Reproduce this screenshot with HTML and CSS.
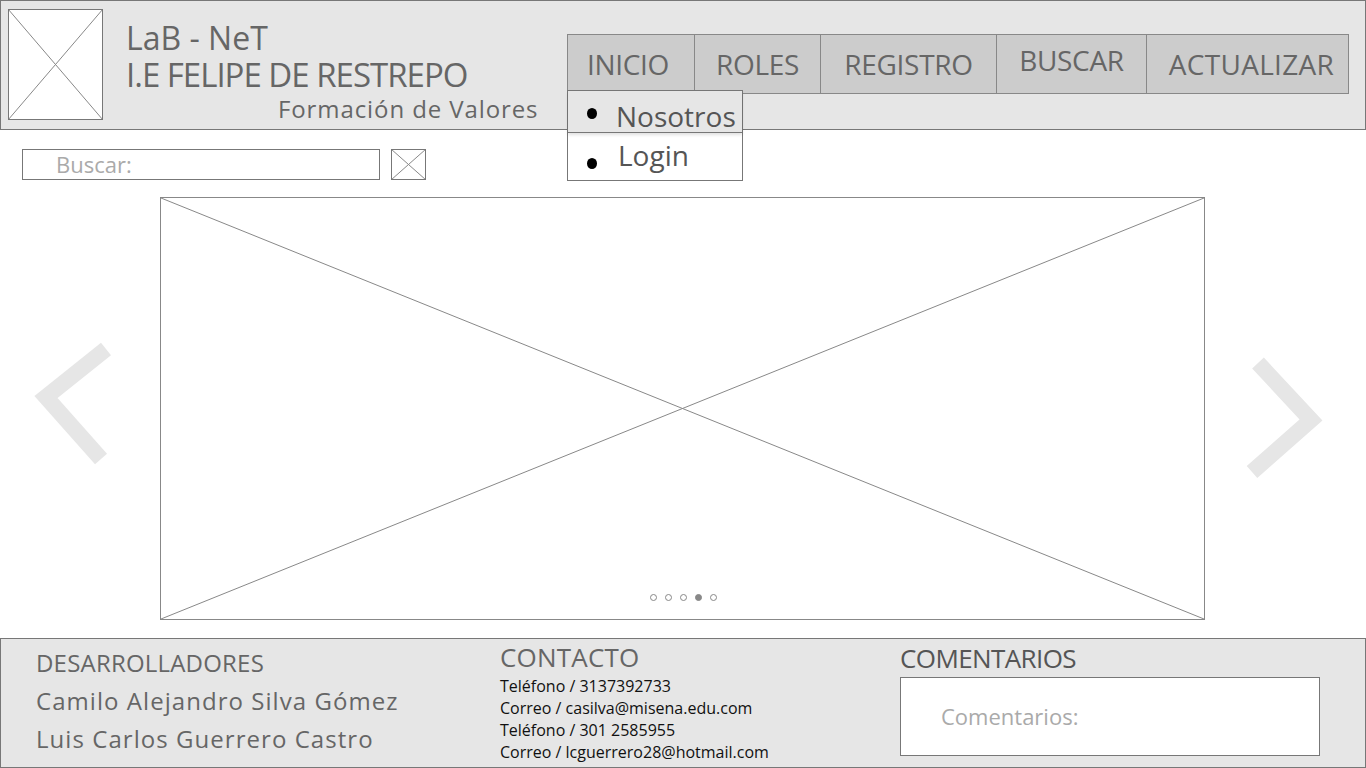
FILE: index.html
```html
<!DOCTYPE html>
<html>
<head>
  <title>LaB - NeT</title>
  <link rel="stylesheet" href="styles.css">
</head>
<body>
  <div class="cabecera">
    <div class="logo">
      <svg width="95" height="111" viewBox="0 0 95 111" preserveAspectRatio="none">
        <line x1="0" y1="0" x2="95" y2="111" stroke="#888" stroke-width="1"/>
        <line x1="95" y1="0" x2="0" y2="111" stroke="#888" stroke-width="1"/>
      </svg>
    </div>
    <div class="titulo">
      <div class="t1">LaB - NeT</div>
      <div class="t2">I.E FELIPE DE RESTREPO</div>
      <div class="t3">Formación de Valores</div>
    </div>
    <ul class="menu">
      <li class="m-inicio">INICIO</li>
      <li class="m-roles">ROLES</li>
      <li class="m-registro">REGISTRO</li>
      <li class="m-buscar">BUSCAR</li>
      <li class="m-actualizar">ACTUALIZAR</li>
    </ul>
  </div>

  <div class="submenu">
    <div class="sub-item activo"><span class="punto"></span>Nosotros</div>
    <div class="sub-item login"><span class="punto"></span>Login</div>
  </div>

  <div class="busqueda">
    <div class="campo">Buscar:</div>
    <div class="boton-x">
      <svg width="35" height="31" viewBox="0 0 35 31" preserveAspectRatio="none">
        <line x1="0" y1="0" x2="35" y2="31" stroke="#888" stroke-width="1"/>
        <line x1="35" y1="0" x2="0" y2="31" stroke="#888" stroke-width="1"/>
      </svg>
    </div>
  </div>

  <div class="carrusel">
    <div class="flecha">
      <svg width="160" height="423" viewBox="0 0 160 423">
        <polyline points="106,152 46,200 101,262" fill="none" stroke="#e6e6e6" stroke-width="16"/>
      </svg>
    </div>
    <div class="imagen">
      <svg class="cruz" viewBox="0 0 1045 423" preserveAspectRatio="none">
        <line x1="0" y1="0" x2="1045" y2="423" stroke="#888" stroke-width="1"/>
        <line x1="1045" y1="0" x2="0" y2="423" stroke="#888" stroke-width="1"/>
      </svg>
      <div class="puntos">
        <span></span><span></span><span></span><span class="lleno"></span><span></span>
      </div>
    </div>
    <div class="flecha">
      <svg width="161" height="423" viewBox="0 0 161 423">
        <polyline points="53,166 106,223 47,275" fill="none" stroke="#e6e6e6" stroke-width="16"/>
      </svg>
    </div>
  </div>

  <div class="pie">
    <div class="col-dev">
      <div class="dev-titulo">DESARROLLADORES</div>
      <div class="dev-nombre">Camilo Alejandro Silva Gómez</div>
      <div class="dev-nombre">Luis Carlos Guerrero Castro</div>
    </div>
    <div class="col-contacto">
      <div class="pie-titulo">CONTACTO</div>
      <div class="dato">Teléfono / 3137392733</div>
      <div class="dato">Correo / casilva@misena.edu.com</div>
      <div class="dato">Teléfono / 301 2585955</div>
      <div class="dato">Correo / lcguerrero28@hotmail.com</div>
    </div>
    <div class="col-comentarios">
      <div class="pie-titulo com">COMENTARIOS</div>
      <div class="caja-com">Comentarios:</div>
    </div>
  </div>
</body>
</html>
```

FILE: styles.css
```css
body {
  margin: 0;
  font-family: "Open Sans", sans-serif;
  color: #666;
  background: #fff;
}
.cabecera {
  display: flex;
  align-items: flex-start;
  height: 130px;
  box-sizing: border-box;
  background: #e6e6e6;
  border: 1px solid #777;
  padding: 8px 16px 0 7px;
}
.logo {
  width: 95px;
  height: 111px;
  background: #fff;
  border: 1px solid #777;
  box-sizing: border-box;
  overflow: hidden;
}
.logo svg {
  display: block;
  margin: -1px;
}
.titulo {
  margin-left: 23px;
  margin-top: 11px;
}
.t1 {
  font-size: 32px;
  line-height: 36px;
}
.t2 {
  font-size: 33px;
  line-height: 38px;
  letter-spacing: -1px;
}
.t3 {
  font-size: 24px;
  line-height: 30px;
  margin-left: 152px;
  letter-spacing: 0.9px;
}
.menu {
  display: flex;
  list-style: none;
  margin: 25px 0 0 auto;
  padding: 0;
  height: 60px;
  background: #ccc;
  border: 1px solid #888;
  box-sizing: border-box;
}
.menu li {
  font-size: 28px;
  line-height: 58px;
  text-align: center;
  border-left: 1px solid #888;
  box-sizing: border-box;
  letter-spacing: -0.3px;
}
.menu li:first-child {
  border-left: none;
}
.m-inicio { width: 126px; padding-right: 6px; }
.m-roles { width: 126px; }
.m-registro { width: 176px; }
.m-buscar { width: 150px; line-height: 50px !important; }
.m-actualizar { width: 202px; padding-left: 8px; letter-spacing: 0.3px !important; }

.submenu {
  position: absolute;
  left: 567px;
  top: 90px;
  width: 176px;
  border: 1px solid #777;
  box-sizing: border-box;
  background: #fff;
}
.sub-item {
  display: flex;
  align-items: center;
  font-size: 28px;
  color: #555;
  padding-left: 19px;
}
.sub-item.activo {
  height: 42px;
  background: #e6e6e6;
  border-bottom: 1px solid #777;
  box-shadow: 0 2px 3px rgba(0, 0, 0, 0.12);
  padding-top: 8px;
  box-sizing: border-box;
}
.sub-item.login {
  height: 47px;
  padding-left: 19px;
  padding-bottom: 3px;
  box-sizing: border-box;
}
.punto {
  width: 10px;
  height: 11px;
  border-radius: 50%;
  background: #000;
  margin-right: 19px;
}
.activo .punto {
  margin-top: -4px;
}
.login .punto {
  margin-top: 16px;
  margin-right: 21px;
}

.busqueda {
  display: flex;
  align-items: flex-start;
  margin-top: 19px;
  padding-left: 22px;
}
.campo {
  width: 358px;
  height: 31px;
  box-sizing: border-box;
  border: 1px solid #777;
  background: #fff;
  font-size: 22px;
  line-height: 28px;
  color: #aaa;
  padding-left: 33px;
}
.boton-x {
  width: 35px;
  height: 31px;
  margin-left: 11px;
  border: 1px solid #777;
  box-sizing: border-box;
  overflow: hidden;
}
.boton-x svg {
  display: block;
  margin: -1px;
}

.carrusel {
  display: flex;
  margin-top: 17px;
  height: 423px;
}
.flecha svg {
  display: block;
}
.imagen {
  position: relative;
  width: 1045px;
  height: 423px;
  border: 1px solid #888;
  box-sizing: border-box;
}
.cruz {
  position: absolute;
  left: 0;
  top: 0;
  width: 100%;
  height: 100%;
}
.puntos {
  position: absolute;
  left: 489px;
  top: 396px;
  display: flex;
  gap: 8px;
}
.puntos span {
  width: 5px;
  height: 5px;
  border: 1px solid #888;
  border-radius: 50%;
  background: #fff;
}
.puntos span.lleno {
  background: #888;
}

.pie {
  display: grid;
  grid-template-columns: 464px 400px 1fr;
  margin-top: 18px;
  height: 130px;
  box-sizing: border-box;
  background: #e6e6e6;
  border: 1px solid #777;
  padding-left: 35px;
}
.dev-titulo {
  font-size: 24px;
  line-height: 28px;
  margin-top: 10px;
  letter-spacing: 0.2px;
}
.dev-nombre {
  font-size: 24px;
  line-height: 38px;
  letter-spacing: 1.05px;
}
.dev-titulo + .dev-nombre {
  margin-top: 5px;
}
.pie-titulo {
  font-size: 26px;
  line-height: 30px;
  margin-top: 3px;
  letter-spacing: 0.2px;
}
.pie-titulo.com {
  font-size: 26px;
  margin-top: 4px;
  color: #555;
  letter-spacing: -0.6px;
}
.dato {
  font-size: 16px;
  line-height: 22px;
  color: #111;
  letter-spacing: 0;
}
.pie-titulo + .dato {
  margin-top: 3px;
}
.caja-com {
  width: 420px;
  height: 79px;
  box-sizing: border-box;
  margin-top: 4px;
  background: #fff;
  border: 1px solid #777;
  font-size: 22px;
  line-height: 77px;
  color: #aaa;
  padding-left: 40px;
}
```
